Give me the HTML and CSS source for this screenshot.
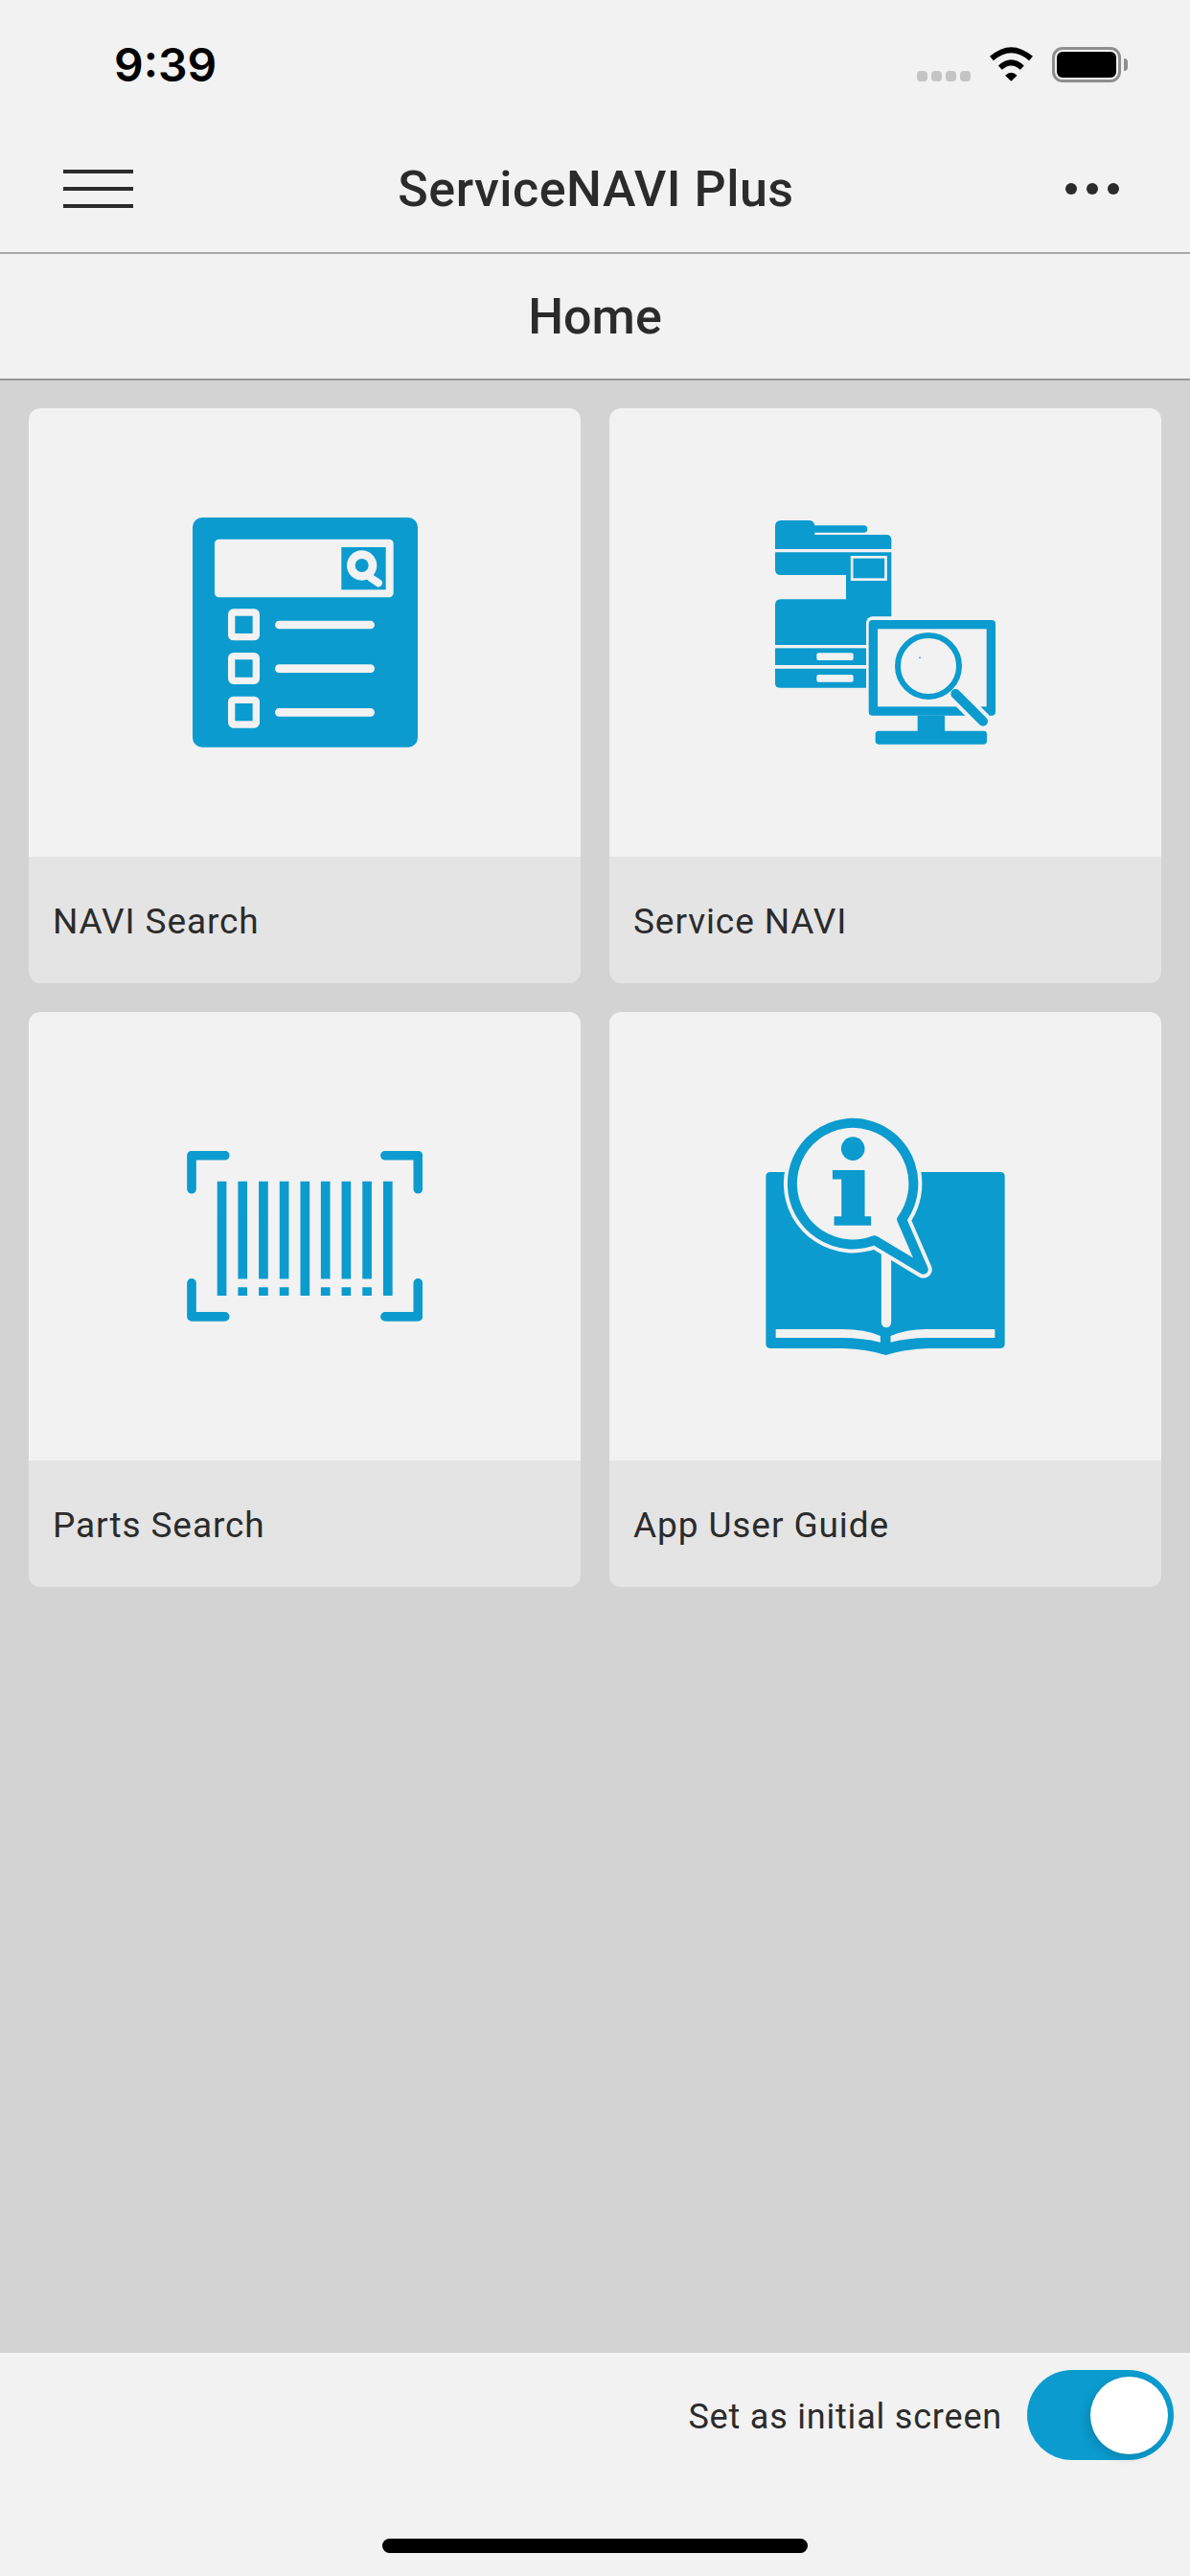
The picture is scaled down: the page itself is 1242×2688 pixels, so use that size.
FILE: index.html
```html
<!DOCTYPE html>
<html>

<head>
    <title>ServiceNAVI Plus</title>
    <link rel="stylesheet" href="styles.css">
</head>

<body>
    <div class="status-bar">
        <span class="time">9:39</span>
        <div class="status-icons">
            <div class="signal"><span></span><span></span><span></span><span></span></div>
            <svg class="wifi" viewBox="335 57 143 108">
                <path class="wifi-arc" d="M344 93Q406 39 469 93"/>
                <path class="wifi-arc" d="M371 122Q406 90 441 122"/>
                <path class="wifi-dot" d="M406 165L387 147Q406 128 425 147Z"/>
            </svg>
            <div class="battery"><div class="battery-level"></div></div>
            <div class="battery-nub"></div>
        </div>
    </div>

    <div class="nav-bar">
        <div class="hamburger"><span></span><span></span><span></span></div>
        <div class="app-title">ServiceNAVI Plus</div>
        <div class="more"><span></span><span></span><span></span></div>
    </div>

    <div class="page-title">Home</div>

    <div class="content">
        <div class="card">
            <div class="card-image">
                <svg class="icon" width="235" height="240" viewBox="94 88 705 720">
                    <rect class="blue" x="94" y="88" width="705" height="719" rx="30"/>
                    <rect class="light" x="163" y="156" width="560" height="182" rx="14"/>
                    <rect class="blue" x="560" y="181" width="139" height="133"/>
                    <circle class="ring-light" cx="624" cy="238" r="34" stroke-width="26"/>
                    <path class="line" d="M652 277L676 293" stroke-width="24"/>
                    <rect class="box" x="216" y="385" width="77" height="77" rx="6"/>
                    <rect class="box" x="216" y="522" width="77" height="77" rx="6"/>
                    <rect class="box" x="216" y="659" width="77" height="77" rx="6"/>
                    <path class="line" d="M365 424H651M365 561H651M365 698H651" stroke-width="26"/>
                </svg>
            </div>
            <div class="card-label">NAVI Search</div>
        </div>

        <div class="card">
            <div class="card-image">
                <svg class="icon" width="230" height="234" viewBox="87 69 690 702">
                    <!-- printer -->
                    <path class="blue" d="M87 159V88Q87 69 106 69H192Q209 69 211 85H365A11 11 0 0 1 365 107H211V114H435Q451 114 451 130V159Z"/>
                    <path class="blue" d="M87 169H451V459H87V334Q87 316 105 316H309V240H105Q87 240 87 222Z"/>
                    <rect class="panel" x="327.500" y="184" width="106" height="70"/>
                    <rect class="blue" x="87" y="469" width="300" height="53"/>
                    <path class="blue" d="M87 533H387V593H101Q87 593 87 579Z"/>
                    <rect class="light" x="217" y="484" width="115" height="23" rx="6"/>
                    <rect class="light" x="217" y="552" width="115" height="23" rx="6"/>
                    <!-- monitor -->
                    <rect class="light" x="372" y="370" width="420" height="320" rx="20"/>
                    <rect class="blue" x="380" y="381" width="397" height="299" rx="12"/>
                    <rect class="light" x="408" y="409" width="341" height="243"/>
                    <rect class="blue" x="533" y="680" width="85" height="50"/>
                    <rect class="blue" x="401" y="728" width="349" height="42" rx="10"/>
                    <path class="halo-line" d="M648 608L738 698"/>
                    <circle class="ring" cx="567" cy="525" r="96" stroke-width="18"/>
                    <path class="line-blue" d="M652 612L738 698" stroke-width="30"/>
                    <rect class="blue" x="537" y="497" width="6" height="3"/>
                </svg>
            </div>
            <div class="card-label">Service NAVI</div>
        </div>

        <div class="card">
            <div class="card-image">
                <svg class="icon" width="246" height="178" viewBox="45 62 737 533">
                    <path class="corner" d="M60 181V76H164M768 181V76H665M60 475V580H164M768 475V580H665"/>
                    <path class="blue" d="M140 157h29v357h-29zM400 157h29v357h-29zM659 157h29v357h-29z"/>
                    <path class="blue" d="M205 157h29v305h-29zM270 157h29v305h-29zM335 157h29v305h-29zM464 157h29v305h-29zM529 157h29v305h-29zM594 157h29v305h-29z"/>
                    <path class="blue" d="M205 488h29v26h-29zM270 488h29v26h-29zM335 488h29v26h-29zM464 488h29v26h-29zM529 488h29v26h-29zM594 488h29v26h-29z"/>
                </svg>
            </div>
            <div class="card-label">Parts Search</div>
        </div>

        <div class="card">
            <div class="card-image">
                <svg class="icon" width="250" height="248" viewBox="59 48 749 745">
                    <path class="blue" d="M73 219H794Q808 219 808 233V758Q808 772 794 772H570Q490 775 435 793Q380 775 300 772H73Q59 772 59 758V233Q59 219 73 219Z"/>
                    <path class="line" d="M436.500 440V691" stroke-width="31"/>
                    <path class="light" d="M90 712H300Q370 712 418 733V753Q360 739 300 739H90Z"/>
                    <path class="light" d="M777 712H560Q500 712 450 733V753Q510 739 560 739H777Z"/>
                    <path class="bubble-halo" d="M485 368L553 525L400 433A190 190 0 1 1 485 368Z"/>
                    <path class="bubble" d="M485 368L553 525L400 433A190 190 0 1 1 485 368Z"/>
                    <circle class="blue" cx="332" cy="146" r="37"/>
                    <path class="blue" d="M268 213H369V358H389V387H273V358H296V242H268Z"/>
                </svg>
            </div>
            <div class="card-label">App User Guide</div>
        </div>
    </div>

    <div class="footer">
        <div class="initial-row">
            <span class="initial-text">Set as initial screen</span>
            <div class="toggle"><div class="knob"></div></div>
        </div>
        <div class="home-bar"></div>
    </div>
</body>

</html>
```

FILE: styles.css
```css
* {
    box-sizing: border-box;
}

body {
    margin: 0;
    width: 1242px;
    height: 2688px;
    display: flex;
    flex-direction: column;
    background-color: #f2f2f2;
    color: #2b2b2b;
    font-family: Roboto, "Liberation Sans", sans-serif;
}

.status-bar {
    height: 132px;
    flex: none;
    display: flex;
    justify-content: space-between;
    align-items: flex-start;
    padding: 49px 65px 0 119px;
}

.time {
    font-family: Inter, "Liberation Sans", sans-serif;
    font-size: 48px;
    font-weight: 600;
    line-height: 37px;
    color: #000;
}

.status-icons {
    display: flex;
    align-items: flex-end;
    height: 37px;
}

.signal {
    display: flex;
    gap: 4px;
    margin-right: 19px;
    margin-bottom: 1px;
}

.signal span {
    width: 11px;
    height: 11px;
    border-radius: 4px;
    background-color: #c4c4c4;
}

.wifi {
    width: 47px;
    height: 36px;
    margin-right: 19px;
    margin-bottom: 1px;
}

.wifi-arc {
    fill: none;
    stroke: #000;
    stroke-width: 18;
}

.wifi-dot {
    fill: #000;
}

.battery {
    width: 72px;
    height: 37px;
    border: 3px solid #8e8e8e;
    border-radius: 11px;
    padding: 2px;
}

.battery-level {
    height: 100%;
    background-color: #000;
    border-radius: 6px;
}

.battery-nub {
    width: 4px;
    height: 13px;
    margin: 0 0 12px 3px;
    background-color: #8e8e8e;
    border-radius: 0 4px 4px 0;
}

.nav-bar {
    height: 133px;
    flex: none;
    display: grid;
    grid-template-columns: 1fr auto 1fr;
    align-items: center;
    padding: 0 64px 2px 66px;
    border-bottom: 2px solid #a9a9a9;
}

.hamburger {
    width: 73px;
    display: flex;
    flex-direction: column;
    gap: 14px;
}

.hamburger span {
    height: 4px;
    background-color: #2b2b2b;
}

.app-title {
    padding-top: 2px;
    font-size: 52px;
    font-weight: 500;
    letter-spacing: 0.5px;
}

.more {
    justify-self: end;
    display: flex;
    gap: 10px;
    margin-right: 10px;
}

.more span {
    width: 12px;
    height: 12px;
    border-radius: 50%;
    background-color: #2b2b2b;
}

.page-title {
    height: 132px;
    flex: none;
    display: flex;
    justify-content: center;
    align-items: center;
    font-size: 52px;
    font-weight: 500;
    border-bottom: 2px solid #999;
}

.content {
    flex: 1;
    display: grid;
    grid-template-columns: 576px 576px;
    gap: 30px;
    align-content: start;
    padding: 29px 30px;
    background-color: #d3d3d3;
}

.card {
    height: 600px;
    border-radius: 12px;
    overflow: hidden;
    display: flex;
    flex-direction: column;
}

.card-image {
    flex: 1;
    display: flex;
    justify-content: center;
    align-items: center;
    background-color: #f2f2f2;
}

.card-label {
    height: 132px;
    display: flex;
    align-items: center;
    padding: 2px 0 0 25px;
    font-size: 37px;
    letter-spacing: 0.9px;
    background-color: #e4e4e4;
}

.blue {
    fill: #0b9bce;
}

.light {
    fill: #f2f2f2;
}

.ring {
    fill: none;
    stroke: #0b9bce;
}

.ring-light {
    fill: none;
    stroke: #f2f2f2;
}

.line {
    fill: none;
    stroke: #f2f2f2;
    stroke-linecap: round;
}

.line-blue {
    fill: none;
    stroke: #0b9bce;
    stroke-linecap: round;
}

.box {
    fill: none;
    stroke: #f2f2f2;
    stroke-width: 22;
}

.panel {
    fill: #0b9bce;
    stroke: #f2f2f2;
    stroke-width: 8;
}

.halo-line {
    fill: none;
    stroke: #f2f2f2;
    stroke-width: 54;
}

.corner {
    fill: none;
    stroke: #0b9bce;
    stroke-width: 29;
    stroke-linecap: round;
    stroke-linejoin: round;
}

.bubble-halo {
    fill: #f2f2f2;
    stroke: #f2f2f2;
    stroke-width: 54;
    stroke-linejoin: round;
}

.bubble {
    fill: #f2f2f2;
    stroke: #0b9bce;
    stroke-width: 30;
    stroke-linejoin: round;
}

.footer {
    height: 234px;
    flex: none;
    display: flex;
    flex-direction: column;
    align-items: center;
    border-top: 1px solid #cdcdcd;
}

.initial-row {
    align-self: stretch;
    display: flex;
    justify-content: flex-end;
    align-items: center;
    gap: 26px;
    padding: 18px 17px 0 0;
}

.initial-text {
    padding-top: 4px;
    font-size: 36px;
    letter-spacing: 0.8px;
}

.toggle {
    width: 153px;
    height: 94px;
    display: flex;
    justify-content: flex-end;
    padding: 7px 6px 6px 0;
    border-radius: 47px;
    background-color: #0b9bce;
}

.knob {
    width: 81px;
    height: 81px;
    border-radius: 50%;
    background-color: #fff;
    box-shadow: -4px 4px 10px rgba(0, 0, 0, 0.12);
}

.home-bar {
    width: 444px;
    height: 15px;
    margin-top: 82px;
    border-radius: 8px;
    background-color: #000;
}
```
